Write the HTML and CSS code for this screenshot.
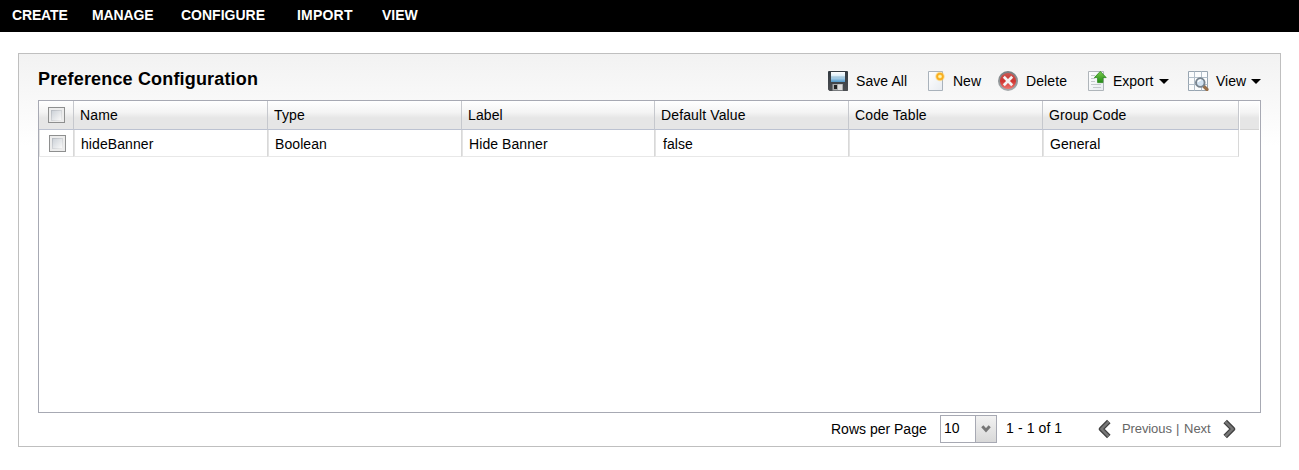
FILE: index.html
```html
<!DOCTYPE html>
<html lang="en">
<head>
<meta charset="utf-8">
<title>Preference Configuration</title>
<link rel="stylesheet" href="styles.css">
</head>
<body>
<nav class="menu">
  <span class="menu-item create">CREATE</span><span class="menu-item manage">MANAGE</span><span class="menu-item configure">CONFIGURE</span><span class="menu-item import">IMPORT</span><span class="menu-item">VIEW</span>
</nav>
<main class="panel">
  <header class="panel-head">
    <h1 class="title">Preference Configuration</h1>
    <div class="toolbar">
      <div class="tool save">
        <svg width="20" height="20" viewBox="0 0 20 20">
          <defs><linearGradient id="lbl" x2="0" y2="1"><stop offset="0" stop-color="#fff"/><stop offset=".4" stop-color="#d9edf8"/><stop offset="1" stop-color="#4e96c8"/></linearGradient>
          <linearGradient id="body" x2="0" y2="1"><stop offset="0" stop-color="#333a41"/><stop offset="1" stop-color="#4b4e52"/></linearGradient></defs>
          <path d="M.5 0h19l.5.5v19l-.5.5H1.500L0 18.500V.5z" fill="url(#body)"/>
          <path d="M3 1h14v10H3z" fill="url(#lbl)"/><path d="M3 6h14" stroke="#7faac4" stroke-width=".6"/>
          <path d="M4.500 13h10.500v6.500H4.500z" fill="#a9abac"/><path d="M6 14h3v4H6z" fill="#222"/><path d="M10 13.500h4v5.500h-4z" fill="#ddd"/>
        </svg><span>Save All</span></div>
      <div class="tool new">
        <svg width="17" height="20" viewBox="0 0 17 20">
          <defs><linearGradient id="page" x2="1" y2="1"><stop offset="0" stop-color="#fff"/><stop offset="1" stop-color="#e7ebf0"/></linearGradient>
          <radialGradient id="sun"><stop offset="0" stop-color="#fffbd0"/><stop offset=".3" stop-color="#ffe98a"/><stop offset=".6" stop-color="#fbb326"/><stop offset="1" stop-color="#ffd66b" stop-opacity=".25"/></radialGradient></defs>
          <path d="M.5.5h14v19H.5z" fill="url(#page)" stroke="#a9b2bb"/>
          <circle cx="12" cy="5.500" r="5" fill="url(#sun)"/><circle cx="12" cy="5.500" r="2.800" fill="none" stroke="#f9ae20" stroke-width="1.500"/>
        </svg><span>New</span></div>
      <div class="tool delete">
        <svg width="20" height="20" viewBox="0 0 20 20">
          <defs><linearGradient id="ring" x2="0" y2="1"><stop offset="0" stop-color="#777d80"/><stop offset="1" stop-color="#a7abad"/></linearGradient>
          <linearGradient id="red" x2="0" y2="1"><stop offset="0" stop-color="#c95752"/><stop offset=".5" stop-color="#cf3430"/><stop offset="1" stop-color="#ef7771"/></linearGradient></defs>
          <circle cx="10" cy="10" r="10" fill="url(#ring)"/><circle cx="10" cy="10" r="8" fill="url(#red)"/>
          <path d="M5.800 5.800l8.400 8.400M14.200 5.800l-8.400 8.400" stroke="#f4f4f4" stroke-width="2.700"/>
        </svg><span>Delete</span></div>
      <div class="tool export">
        <svg width="19" height="20" viewBox="0 0 19 20">
          <defs><linearGradient id="green" x2="0" y2="1"><stop offset="0" stop-color="#79cc4c"/><stop offset="1" stop-color="#228b15"/></linearGradient></defs>
          <path d="M.5.500h15v19H.5z" fill="url(#page)" stroke="#afb5ba"/>
          <path d="M3 4.500h4M3 7.500h4M3 10.500h4M3 13.500h10M5 16.500h8" stroke="#c3c8cc"/>
          <path d="M12.300.4l5.900 6.200h-3.300v5H9.600v-5H6.400z" fill="url(#green)" stroke="#278619" stroke-width=".8"/>
        </svg><span>Export</span><i class="caret"></i></div>
      <div class="tool view">
        <svg width="21" height="20" viewBox="0 0 21 20">
          <path d="M.5.500h19v19H.5z" fill="#fbfcfd" stroke="#98a5b1"/><path d="M.5 6.500h19M.5 13.500h19M6.500.5v19M13.500.5v19" stroke="#b3bfca"/>
          <path d="M16 15.500l3 3" stroke="#98704b" stroke-width="3.200" stroke-linecap="round"/>
          <circle cx="12.300" cy="11.600" r="4.300" fill="#d3e3f2" stroke="#77838e" stroke-width="1.900"/><path d="M10.200 11a2.500 2.500 0 0 1 3-2" fill="none" stroke="#fff" stroke-width="1.400"/>
        </svg><span>View</span><i class="caret"></i></div>
    </div>
  </header>
  <section class="grid">
    <div class="row head">
      <div class="cell"><i class="check"></i></div><div class="cell">Name</div><div class="cell">Type</div><div class="cell">Label</div><div class="cell">Default Value</div><div class="cell">Code Table</div><div class="cell">Group Code</div><div class="spare"></div>
    </div>
    <div class="row data">
      <div class="cell"><i class="check"></i></div><div class="cell">hideBanner</div><div class="cell">Boolean</div><div class="cell">Hide Banner</div><div class="cell flag">false</div><div class="cell"></div><div class="cell">General</div>
    </div>
  </section>
  <footer class="pager">
    <span class="rows-label">Rows per Page</span>
    <div class="select"><span class="value">10</span><span class="drop"><svg width="10" height="8" viewBox="0 0 10 8"><path d="M1.300 1.300L5 5.300l3.700-4" fill="none" stroke="#777" stroke-width="2.900"/></svg></span></div>
    <span class="range">1 - 1 of 1</span>
    <svg class="prev" width="14" height="20" viewBox="0 0 14 20"><path d="M10.800 2.500L3.300 10l7.500 7.500" fill="none" stroke="#414141" stroke-width="5" stroke-linejoin="round"/><path d="M10.700 2.700L3.500 10l7.200 7.300" fill="none" stroke="#777" stroke-width="2.400"/></svg>
    <span class="link previous">Previous</span><span class="link bar">|</span><span class="link next">Next</span>
    <svg class="fwd" width="14" height="20" viewBox="0 0 14 20"><path d="M3.200 2.500L10.700 10l-7.500 7.500" fill="none" stroke="#414141" stroke-width="5" stroke-linejoin="round"/><path d="M3.300 2.700L10.500 10l-7.200 7.300" fill="none" stroke="#777" stroke-width="2.400"/></svg>
  </footer>
</main>
</body>
</html>
```

FILE: styles.css
```css
* { box-sizing: border-box; }
body { margin: 0; background: #fff; color: #000; font: 14px/16px "Liberation Sans", Arial, sans-serif; }
svg { display: block; flex: none; }
span { white-space: nowrap; }
.menu { display: flex; height: 32px; padding: 7px 0 0 12px; background: #000; color: #fff; font-weight: bold; }
.menu-item { flex: none; }
.create { width: 80px; letter-spacing: -0.15px; }
.manage { width: 89px; letter-spacing: -0.15px; }
.configure { width: 116px; }
.import { width: 85px; letter-spacing: 0.2px; }
.panel { width: 1263px; height: 394px; margin: 21px 0 0 18px; padding: 0 19px; border: 1px solid #bfbfbf; background: linear-gradient(#f2f2f2, #fff 92px); }
.panel-head { display: flex; height: 46px; }
.title { flex: none; width: 790px; margin: 15px 0 0; font-size: 18px; line-height: 20px; letter-spacing: 0.17px; }
.toolbar { display: flex; padding-top: 17px; }
.tool { display: flex; flex: none; height: 20px; line-height: 20px; }
.tool span { padding-left: 8px; }
.save { width: 100px; letter-spacing: 0.08px; }
.new { width: 70px; }
.delete { width: 90px; letter-spacing: 0.1px; }
.export { width: 100px; }
.export span { padding-left: 6px; }
.view span { padding-left: 7px; }
.caret { height: 5px; margin: 8px 0 0 6px; border: 5px solid transparent; border-top-color: #000; border-bottom: 0; }
.view .caret { margin-left: 5px; }
.grid { width: 1223px; height: 313px; border: 1px solid #a7a9b3; background: #fff; }
.row { display: grid; grid-template-columns: 35px 194px 194px 193px 194px 194px 196px 21px; }
.head { height: 29px; }
.head .cell { padding: 6px 0 0 6px; border-right: 1px solid #c6c8cd; border-bottom: 1px solid #bcc2d1; background: linear-gradient(#fff, #f4f4f4 40%, #e6e6e6 60%, #e6e6e6); letter-spacing: 0.12px; }
.spare { margin: 0 1px 0 1px; border-bottom: 1px solid #d4d4d4; background: linear-gradient(#fff, #f4f4f4 40%, #e6e6e6 60%, #e6e6e6); }
.data { height: 27px; }
.data .cell { padding: 6px 0 0 7px; border-right: 1px solid #d8d8d8; border-bottom: 1px solid #e8e8e8; letter-spacing: 0.08px; }
.data .cell + .cell { box-shadow: inset 1px 0 #e4e4e4; }
.data .flag { padding-left: 8px; }
.row .cell:first-child { padding: 6px 0 0 9px; }
.data .cell:first-child { padding: 5px 0 0 10px; box-shadow: inset 1px 0 #e4e4e4; }
.check { display: block; width: 17px; height: 17px; border: 1px solid #8e8f8f; background: linear-gradient(135deg, #ced3d9, #f8f8f8) 3px 3px / 9px 9px no-repeat, linear-gradient(135deg, #b4b9c0, #eee) 2px 2px / 11px 11px no-repeat #ececec; }
.head .check { height: 16px; }
.pager { display: flex; height: 33px; padding: 2px 0 0 793px; }
.rows-label { flex: none; width: 109px; padding-top: 6px; }
.select { display: flex; flex: none; width: 57px; height: 28px; border: 1px solid #a7a9b3; background: #fff; }
.value { width: 34px; padding: 4px 0 0 3px; }
.drop { display: flex; align-items: center; justify-content: center; width: 21px; border-left: 1px solid #a7a9b3; background: linear-gradient(#f2f2f2, #d8d8d8); }
.range { flex: none; width: 94px; padding: 5px 0 0 9px; letter-spacing: 0.1px; }
.prev { margin: 4px 0 0 7px; }
.link { flex: none; padding-top: 6px; color: #666; font-size: 13px; }
.previous { width: 64px; padding-left: 10px; letter-spacing: -0.1px; }
.bar { width: 8px; }
.next { width: 38px; }
.fwd { margin: 4px 0 0 0; }
```
